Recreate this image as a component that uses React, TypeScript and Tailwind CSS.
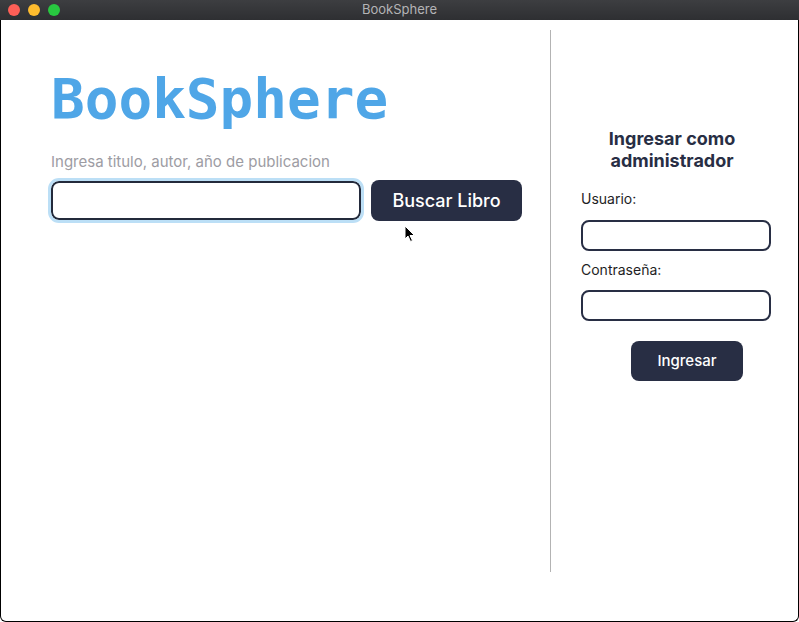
import React from 'react';

const sans = { fontFamily: 'Inter, "Noto Sans", "Liberation Sans", sans-serif' };

function TitleBar() {
  return (
    <div className="relative h-[20px] flex items-center bg-gradient-to-b from-[#3d3e41] to-[#2e2f32]">
      <div className="flex items-center gap-[8px] pl-[8px]">
        <span className="w-[12px] h-[12px] rounded-full bg-[#fe5f57]" />
        <span className="w-[12px] h-[12px] rounded-full bg-[#febc2e]" />
        <span className="w-[12px] h-[12px] rounded-full bg-[#28c840]" />
      </div>
      <div className="absolute inset-0 flex items-center justify-center text-[13px] text-[#b4b4b6]">
        BookSphere
      </div>
    </div>
  );
}

function Cursor() {
  return (
    <svg className="absolute left-[404px] top-[225px]" width="12" height="18" viewBox="0 0 12 18">
      <path d="M1 1 L1 14 L4 11 L6.5 16.5 L8.5 15.5 L6 10.5 L10.5 10.5 Z" fill="#000" stroke="#fff" strokeWidth="1" />
    </svg>
  );
}

export default function App() {
  return (
    <div className="relative w-[799px] h-[622px] flex flex-col bg-white" style={sans}>
      <TitleBar />
      <div className="flex-1 flex items-start pt-[10px] border-x border-b border-black rounded-b-[6px] bg-white">
        {/* search side */}
        <section className="w-[550px] h-[542px] border-r border-[#b3b3b3] pl-[50px] pt-[36px]">
          <h1
            className="text-[56px] leading-[66px] font-bold text-[#4fa6e7]"
            style={{ fontFamily: '"DejaVu Sans Mono", "Liberation Mono", monospace' }}
          >
            BookSphere
          </h1>
          <p className="mt-[21px] text-[15px] leading-[18px] text-[#9d9ca3]">
            Ingresa titulo, autor, año de publicacion
          </p>
          <div className="mt-[9px] flex items-center gap-[10px]">
            <input
              type="text"
              className="w-[310px] h-[39px] rounded-[8px] border-2 border-[#232a3b] outline-[3px] outline-solid outline-[#bcdff6] px-2 text-[16px]"
            />
            <button className="w-[151px] h-[41px] rounded-[8px] bg-[#282e44] text-white text-[18px] font-medium">
              Buscar Libro
            </button>
          </div>
        </section>

        {/* admin login */}
        <section className="flex-1 pt-[98px] pl-[30px] pr-[27px]">
          <h2 className="text-center text-[18px] leading-[22px] font-bold text-[#282e44] pr-[8px]">
            Ingresar como
            <br />
            administrador
          </h2>
          <label className="block mt-[18px] text-[14px] leading-[18px] text-[#1e1e24]">Usuario:</label>
          <input
            type="text"
            className="block mt-[12px] w-[190px] h-[31px] rounded-[8px] border-2 border-[#282e44] outline-none"
          />
          <label className="block mt-[10px] text-[14px] leading-[18px] text-[#1e1e24]">Contraseña:</label>
          <input
            type="password"
            className="block mt-[11px] w-[190px] h-[31px] rounded-[8px] border-2 border-[#282e44] outline-none"
          />
          <button className="block mt-[20px] ml-[50px] w-[112px] h-[40px] rounded-[8px] bg-[#282e44] text-white text-[15px] font-medium">
            Ingresar
          </button>
        </section>
      </div>
      <Cursor />
    </div>
  );
}
